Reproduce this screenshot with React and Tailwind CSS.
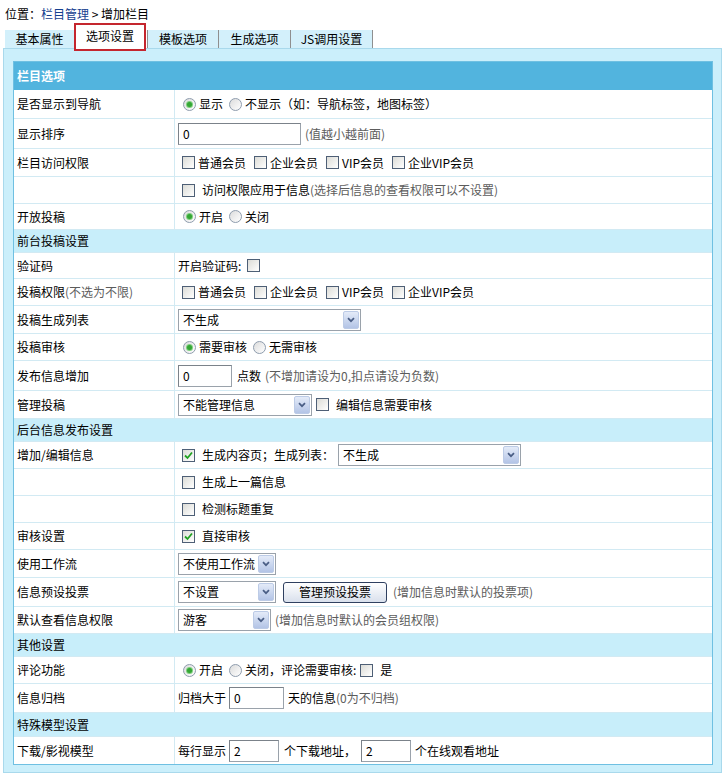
import React from 'react';

const GRAY = 'text-[#5c5c5c]';

function Radio({ checked, children }) {
  return (
    <span className="inline-flex items-center">
      <span className="ml-[5px] mr-[3px] w-[13px] h-[13px] rounded-full border border-[#8e9cad] bg-gradient-to-br from-[#dcdcdc] to-white flex items-center justify-center">
        {checked && <span className="w-[5px] h-[5px] rounded-full bg-[#35a635] shadow-[0_0_0_1px_#7fcf7f]" />}
      </span>
      <span>{children}</span>
    </span>
  );
}

function Check({ checked, className = '' }) {
  return (
    <span className={`w-[13px] h-[13px] border border-[#4e5f76] bg-gradient-to-br from-[#dcdcd7] to-white flex items-center justify-center shrink-0 ${className}`}>
      {checked && (
        <svg width="9" height="9" viewBox="0 0 9 9">
          <path d="M1 4.5 L3.5 7 L8 1.5" fill="none" stroke="#21a121" strokeWidth="1.8" />
        </svg>
      )}
    </span>
  );
}

function CheckLabel({ checked, children, gap = 'mr-[3px]' }) {
  return (
    <span className="inline-flex items-center mr-[4px]">
      <Check checked={checked} className={`ml-[4px] ${gap}`} />
      <span>{children}</span>
    </span>
  );
}

function Select({ w, value }) {
  return (
    <span className={`h-[22px] border border-[#9aa2ab] bg-white flex items-center justify-between shrink-0 ${w}`}>
      <span className="pl-[4px]">{value}</span>
      <span className="w-[16px] h-[18px] mr-[1px] rounded-[2px] border border-[#bccbe6] bg-gradient-to-b from-[#e4ebf8] to-[#b3c4e6] flex items-center justify-center">
        <svg width="8" height="6" viewBox="0 0 8 6">
          <path d="M1 1.2 L4 4.2 L7 1.2" fill="none" stroke="#4a5e85" strokeWidth="1.7" />
        </svg>
      </span>
    </span>
  );
}

function Input({ w, value }) {
  return (
    <span className={`h-[22px] border border-[#9aa2ab] border-t-[#7b828a] border-l-[#7b828a] bg-white flex items-center pl-[4px] shrink-0 ${w}`}>
      {value}
    </span>
  );
}

function Row({ h, label, children, last }) {
  return (
    <div className={`flex bg-white ${last ? '' : 'border-b border-[#d2eaf3]'} ${h}`}>
      <div className="w-[161px] shrink-0 border-r border-[#d2eaf3] pl-[3px] flex items-center">{label}</div>
      <div className="flex-1 flex items-center pl-[3px] whitespace-nowrap">{children}</div>
    </div>
  );
}

function Section({ h = 'h-[23px]', children }) {
  return (
    <div className={`bg-[#c8eefa] border-b border-[#d2eaf3] pl-[3px] flex items-center ${h}`}>{children}</div>
  );
}

const members = ['普通会员', '企业会员', 'VIP会员', '企业VIP会员'];

export default function App() {
  return (
    <div className="w-[725px] h-[773px] bg-white text-[12px] leading-[16px] text-black font-['Noto_Sans_CJK_SC','Noto_Sans',sans-serif] overflow-hidden">
      <div className="h-[24px] pt-[6px] pl-[5px]">
        位置：<span className="text-[#15408f]">栏目管理</span> &gt; 增加栏目
      </div>

      <div className="h-[24px] flex items-end pl-[5px]">
        <div className="h-[18px] w-[69px] bg-[#d3f0fb] flex items-center justify-center">基本属性</div>
        <div className="relative z-10 h-[28px] -mb-[3px] w-[72px] border-2 border-[#c4262e] bg-white flex items-start pt-[3px] justify-center">选项设置</div>
        <div className="h-[18px] w-[72px] ml-[1px] bg-[#d3f0fb] border-l border-r border-[#8f8f8f] flex items-center justify-center">模板选项</div>
        <div className="h-[18px] w-[72px] bg-[#d3f0fb] border-r border-[#8f8f8f] flex items-center justify-center">生成选项</div>
        <div className="h-[18px] w-[82px] bg-[#d3f0fb] border-r border-[#8f8f8f] flex items-center justify-center">JS调用设置</div>
      </div>

      <div className="ml-[3px] w-[719px] border border-[#a9d9ec] bg-[#cbeffb] pt-[12px] pl-[9px] pr-[8px] pb-[7px]">
        <div className="w-[700px] border border-[#6fc0e2]">
          <div className="h-[28px] bg-[#52b4de] text-white font-bold pl-[3px] flex items-center">栏目选项</div>

          <Row h="h-[29px]" label="是否显示到导航">
            <Radio checked>显示</Radio>
            <span className="ml-[1px]" />
            <Radio>不显示（如：导航标签，地图标签）</Radio>
          </Row>
          <Row h="h-[30px]" label="显示排序">
            <Input w="w-[123px]" value="0" />
            <span className={`ml-[4px] ${GRAY}`}>(值越小越前面)</span>
          </Row>
          <Row h="h-[28px]" label="栏目访问权限">
            {members.map((m) => (
              <CheckLabel key={m}>{m}</CheckLabel>
            ))}
          </Row>
          <Row h="h-[27px]" label="">
            <CheckLabel gap="mr-[7px]">
              访问权限应用于信息<span className={GRAY}>(选择后信息的查看权限可以不设置)</span>
            </CheckLabel>
          </Row>
          <Row h="h-[26px]" label="开放投稿">
            <Radio checked>开启</Radio>
            <span className="ml-[1px]" />
            <Radio>关闭</Radio>
          </Row>

          <Section>前台投稿设置</Section>
          <Row h="h-[26px]" label="验证码">
            <span>开启验证码:</span>
            <Check className="ml-[6px]" />
          </Row>
          <Row h="h-[27px]" label={<span>投稿权限<span className={GRAY}>(不选为不限)</span></span>}>
            {members.map((m) => (
              <CheckLabel key={m}>{m}</CheckLabel>
            ))}
          </Row>
          <Row h="h-[28px]" label="投稿生成列表">
            <Select w="w-[183px]" value="不生成" />
          </Row>
          <Row h="h-[27px]" label="投稿审核">
            <Radio checked>需要审核</Radio>
            <span className="ml-[1px]" />
            <Radio>无需审核</Radio>
          </Row>
          <Row h="h-[30px]" label="发布信息增加">
            <Input w="w-[54px]" value="0" />
            <span className="ml-[5px]">点数</span>
            <span className={`ml-[4px] ${GRAY}`}>(不增加请设为0,扣点请设为负数)</span>
          </Row>
          <Row h="h-[28px]" label="管理投稿">
            <Select w="w-[134px]" value="不能管理信息" />
            <CheckLabel gap="mr-[7px]">
              <span className="ml-[0px]">编辑信息需要审核</span>
            </CheckLabel>
          </Row>

          <Section>后台信息发布设置</Section>
          <Row h="h-[27px]" label="增加/编辑信息">
            <CheckLabel checked gap="mr-[7px]">生成内容页；生成列表：</CheckLabel>
            <Select w="w-[183px]" value="不生成" />
          </Row>
          <Row h="h-[27px]" label="">
            <CheckLabel gap="mr-[7px]">生成上一篇信息</CheckLabel>
          </Row>
          <Row h="h-[27px]" label="">
            <CheckLabel gap="mr-[7px]">检测标题重复</CheckLabel>
          </Row>
          <Row h="h-[27px]" label="审核设置">
            <CheckLabel checked gap="mr-[7px]">直接审核</CheckLabel>
          </Row>
          <Row h="h-[28px]" label="使用工作流">
            <Select w="w-[98px]" value="不使用工作流" />
          </Row>
          <Row h="h-[29px]" label="信息预设投票">
            <Select w="w-[98px]" value="不设置" />
            <span className="ml-[7px] h-[21px] w-[104px] rounded-[3px] border border-[#2f4060] bg-gradient-to-b from-white to-[#d9e0ec] flex items-center justify-center">
              管理预设投票
            </span>
            <span className={`ml-[6px] ${GRAY}`}>(增加信息时默认的投票项)</span>
          </Row>
          <Row h="h-[27px]" label="默认查看信息权限">
            <Select w="w-[93px]" value="游客" />
            <span className={`ml-[4px] ${GRAY}`}>(增加信息时默认的会员组权限)</span>
          </Row>

          <Section>其他设置</Section>
          <Row h="h-[27px]" label="评论功能">
            <Radio checked>开启</Radio>
            <span className="ml-[1px]" />
            <Radio>关闭，评论需要审核:</Radio>
            <Check className="ml-[4px] mr-[7px]" />
            <span>是</span>
          </Row>
          <Row h="h-[29px]" label="信息归档">
            <span>归档大于</span>
            <span className="ml-[3px]" />
            <Input w="w-[55px]" value="0" />
            <span className="ml-[4px]">天的信息</span>
            <span className={GRAY}>(0为不归档)</span>
          </Row>

          <Section h="h-[24px]">特殊模型设置</Section>
          <Row h="h-[27px]" label="下载/影视模型" last>
            <span>每行显示</span>
            <span className="ml-[3px]" />
            <Input w="w-[50px]" value="2" />
            <span className="ml-[5px]">个下载地址，</span>
            <span className="ml-[5px]" />
            <Input w="w-[50px]" value="2" />
            <span className="ml-[4px]">个在线观看地址</span>
          </Row>
        </div>
      </div>
    </div>
  );
}
